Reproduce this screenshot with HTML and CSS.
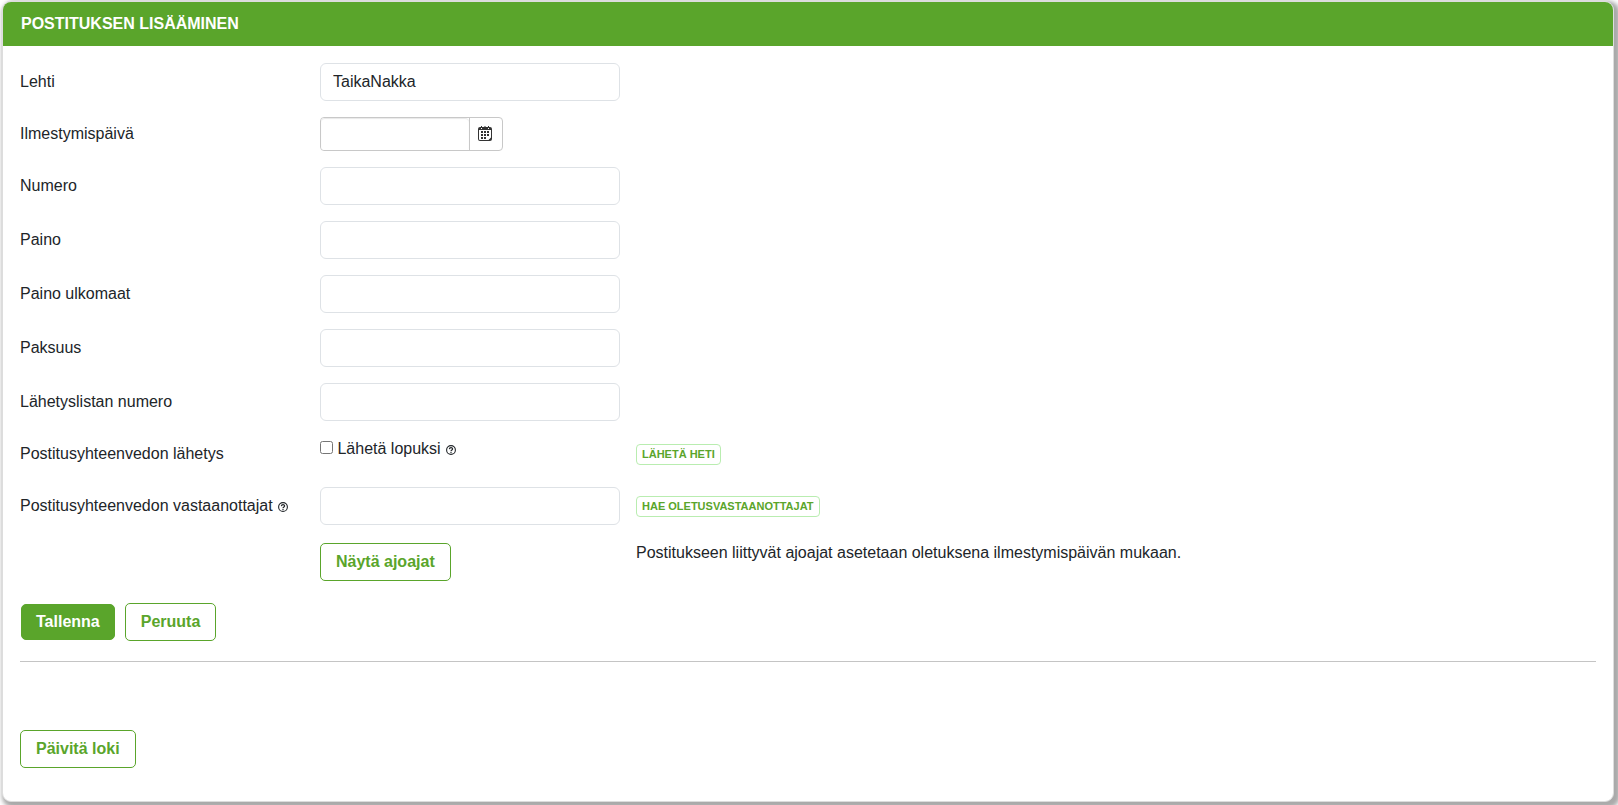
FILE: index.html
```html
<!DOCTYPE html>
<html lang="fi">
<head>
<meta charset="utf-8">
<title>Postituksen lisääminen</title>
<link rel="stylesheet" href="styles.css">
</head>
<body>
<svg class="sprite" aria-hidden="true">
  <symbol id="help" viewBox="0 0 10 10">
    <circle cx="5" cy="5" r="4.4" fill="none" stroke="currentColor" stroke-width="1.1"/>
    <path d="M3.4 4.1C3.5 2.2 6.6 2.2 6.6 4 6.6 5 5 5 5 6.2" fill="none" stroke="currentColor" stroke-width="1.2"/>
    <path d="M4.4 6.9h1.2v1.1H4.4z" fill="currentColor"/>
  </symbol>
</svg>
<main class="card">
  <h1 class="card-title">Postituksen lisääminen</h1>
  <form class="card-body">
    <div class="row">
      <label class="label" for="lehti">Lehti</label>
      <input class="input" id="lehti" type="text" value="TaikaNakka">
    </div>
    <div class="row">
      <label class="label" for="pvm">Ilmestymispäivä</label>
      <div class="date">
        <input class="date-input" id="pvm" type="text">
        <button class="date-button" type="button" aria-label="Valitse päivä">
          <svg width="14" height="15" viewBox="0 0 14 15" aria-hidden="true">
            <path fill="#333" fill-rule="evenodd" d="M2 1h1V0h1v1h2.500V0h1v1H10V0h1v1h1q2 0 2 2v10q0 2-2 2H2q-2 0-2-2V3q0-2 2-2zM1 4V13q0 1 1 1h8.500L13 11.500V4zM3 2v1h1V2zm7 0v1h1V2z"/>
            <path fill="#333" d="M6 5h2v2H6zM9 5h2v2H9zM3 5h2v2H3zM3 8h2v2H3zM6 8h2v2H6zM9 8h2v2H9zM3 11h2v2H3zM6 11h2v2H6z"/>
          </svg>
        </button>
      </div>
    </div>
    <div class="row">
      <label class="label" for="numero">Numero</label>
      <input class="input" id="numero" type="text">
    </div>
    <div class="row">
      <label class="label" for="paino">Paino</label>
      <input class="input" id="paino" type="text">
    </div>
    <div class="row">
      <label class="label" for="ulkomaat">Paino ulkomaat</label>
      <input class="input" id="ulkomaat" type="text">
    </div>
    <div class="row">
      <label class="label" for="paksuus">Paksuus</label>
      <input class="input" id="paksuus" type="text">
    </div>
    <div class="row">
      <label class="label" for="lista">Lähetyslistan numero</label>
      <input class="input" id="lista" type="text">
    </div>
    <div class="row row-send">
      <span class="label">Postitusyhteenvedon lähetys</span>
      <div class="check">
        <input class="checkbox" id="lopuksi" type="checkbox">
        <label for="lopuksi">Lähetä lopuksi</label>
        <svg class="help" aria-hidden="true"><use href="#help"/></svg>
      </div>
      <button class="chip" type="button">Lähetä heti</button>
    </div>
    <div class="row">
      <label class="label" for="vastaanottajat">Postitusyhteenvedon vastaanottajat <svg class="help" aria-hidden="true"><use href="#help"/></svg></label>
      <input class="input" id="vastaanottajat" type="text">
      <button class="chip" type="button">Hae oletusvastaanottajat</button>
    </div>
    <div class="row row-times">
      <button class="btn" type="button">Näytä ajoajat</button>
      <p class="note">Postitukseen liittyvät ajoajat asetetaan oletuksena ilmestymispäivän mukaan.</p>
    </div>
    <div class="actions">
      <button class="btn btn-primary" type="submit">Tallenna</button>
      <button class="btn" type="button">Peruuta</button>
    </div>
    <hr class="rule">
    <button class="btn" type="button">Päivitä loki</button>
  </form>
</main>
</body>
</html>
```
FILE: styles.css
```css
* {
  box-sizing: border-box;
}

body {
  margin: 0;
  padding: 1px 4px 3px 2px;
  background: #fff;
  color: #212529;
  font: 16px/24px "Liberation Sans", Arial, sans-serif;
}

input,
button {
  margin: 0;
  font: inherit;
  color: inherit;
}

button {
  cursor: pointer;
}

.sprite {
  display: none;
}

.card {
  overflow: hidden;
  border: 1px solid #ddd;
  border-radius: 9px;
  background: #fff;
  box-shadow: 3px 3px 4px 3px #aaa;
}

.card-title {
  margin: 0;
  padding: 10px 18px;
  background: #5aa52b;
  color: #fff;
  font-size: 16px;
  line-height: 24px;
  text-transform: uppercase;
}

.card-body {
  padding: 17px 17px 33px;
}

.row {
  display: grid;
  grid-template-columns: 300px 300px 1fr;
  align-items: center;
  justify-items: start;
  margin-bottom: 16px;
}

.input {
  width: 100%;
  height: 38px;
  padding: 0 12px;
  border: 1px solid #dee2e6;
  border-radius: 6px;
  background: #fff;
}

.date {
  display: flex;
  width: 183px;
  height: 34px;
  border: 1px solid #c8c8c8;
  border-radius: 4px;
}

.date-input {
  flex: 1;
  min-width: 0;
  padding: 0 8px;
  border: 0;
  border-radius: 4px;
  background: #fff;
  box-shadow: inset 0 1px 1px #e8e8e8;
}

.date-button {
  display: flex;
  align-items: center;
  justify-content: center;
  width: 33px;
  padding: 0 2px 1px 0;
  border: 0;
  border-left: 1px solid #c8c8c8;
  background: none;
}

.help {
  width: 10px;
  height: 10px;
  margin-left: 1px;
  vertical-align: -1px;
}

.row-send {
  height: 34px;
}

.check {
  align-self: start;
}

.checkbox {
  width: 13px;
  height: 13px;
}

.chip {
  height: 21px;
  margin-left: 16px;
  padding: 0 5px;
  border: 1px solid #b9edb0;
  border-radius: 4px;
  background: #fff;
  color: #5aa52b;
  font-size: 11px;
  font-weight: bold;
  line-height: 19px;
  text-transform: uppercase;
}

.row-times {
  align-items: end;
  margin-bottom: 22px;
  min-height: 40px;
}

.row-times .btn {
  grid-column: 2;
}

.note {
  align-self: start;
  margin: 0 0 0 16px;
}

.btn {
  height: 38px;
  padding: 0 15px;
  border: 1px solid #5aa52b;
  border-radius: 5px;
  background: #fff;
  color: #5aa52b;
  font-weight: bold;
}

.actions {
  display: flex;
  align-items: center;
  gap: 10px;
  padding-left: 1px;
}

.btn-primary {
  height: 36px;
  padding: 0 14px;
  background: #5aa52b;
  color: #fff;
}

.rule {
  height: 1px;
  margin: 20px 0 68px;
  border: 0;
  background: #c4c4c4;
}
```
